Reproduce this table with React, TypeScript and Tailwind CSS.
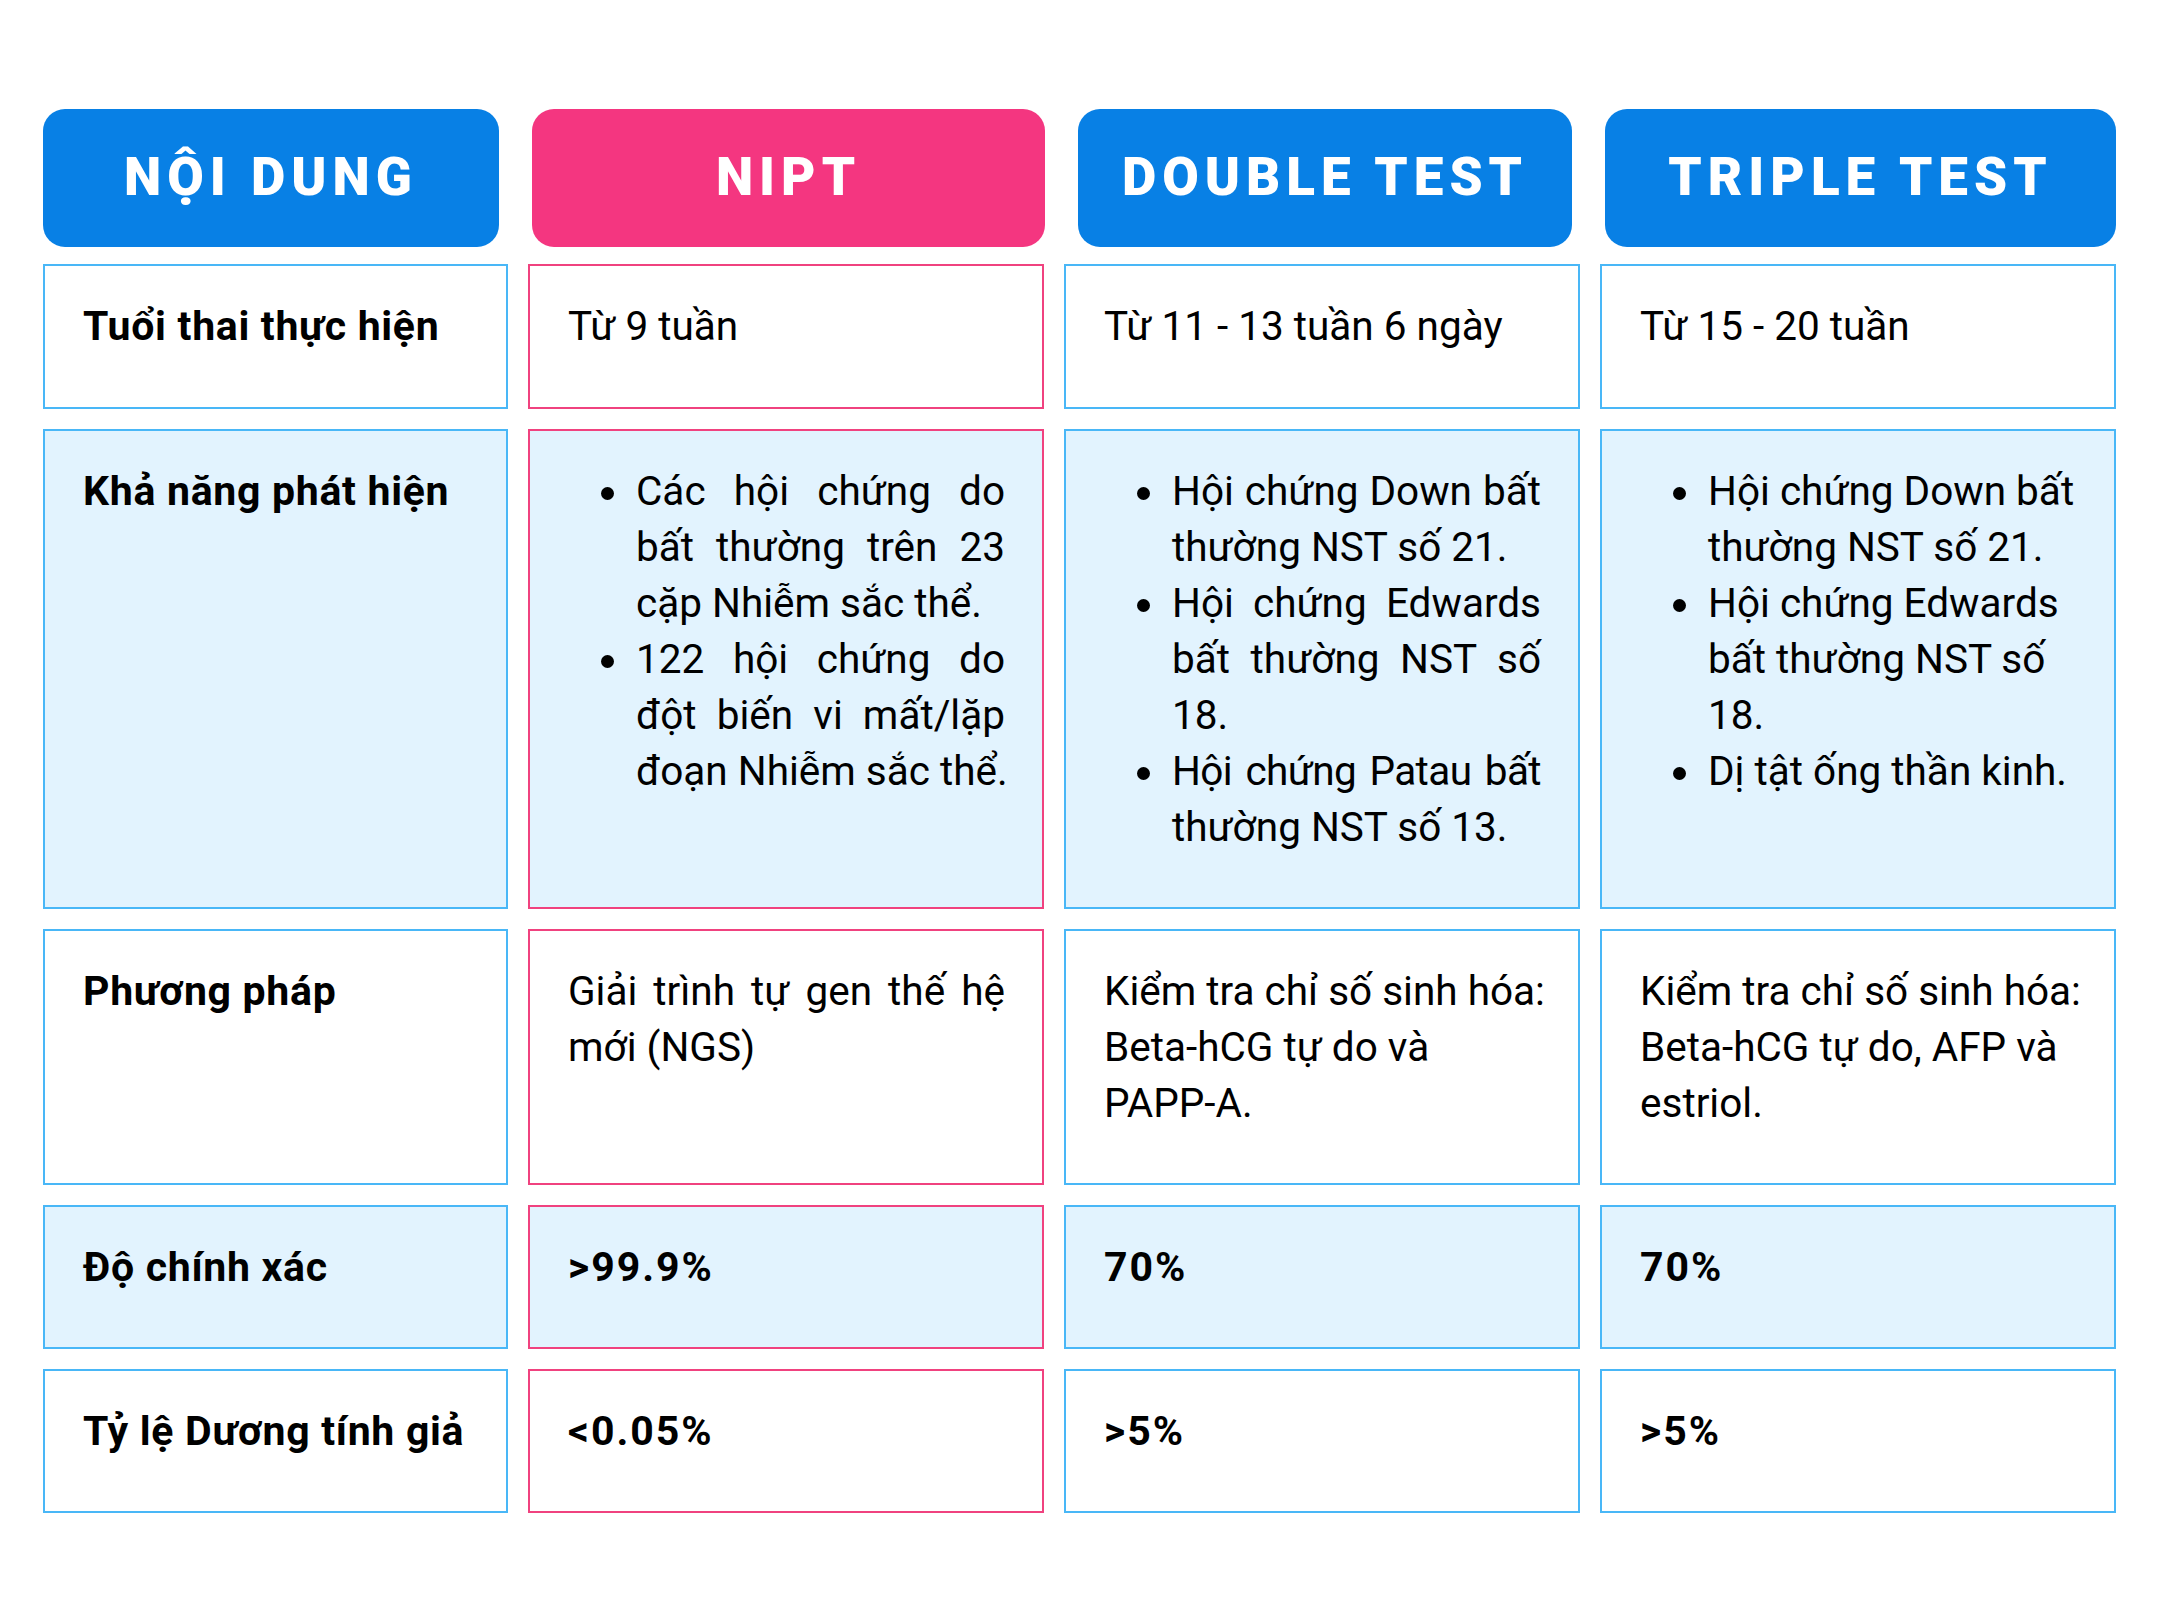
import React from "react";

const BLUE_BORDER = "border-[#49b7f7]";
const PINK_BORDER = "border-[#f0427f]";

type Line = { t: string; j?: boolean; tight?: boolean };

function Lines({ lines }: { lines: Line[] }) {
  return (
    <>
      {lines.map((l, i) => (
        <div
          key={i}
          className={`whitespace-nowrap ${l.j ? "text-justify [text-align-last:justify]" : ""} ${
            l.tight ? "tracking-[-0.6px]" : ""
          }`}
        >
          {l.t}
        </div>
      ))}
    </>
  );
}

function Bullet({ lines }: { lines: Line[] }) {
  return (
    <div className="flex">
      <div className="w-[68px] shrink-0 flex justify-end pr-[22px]">
        <div className="w-[13px] h-[13px] rounded-full bg-black mt-[24px]" />
      </div>
      <div className="flex-1 min-w-0">
        <Lines lines={lines} />
      </div>
    </div>
  );
}

function Cell({
  pink,
  tint,
  children,
}: {
  pink?: boolean;
  tint?: boolean;
  children: React.ReactNode;
}) {
  return (
    <div
      className={`border-2 ${pink ? PINK_BORDER : BLUE_BORDER} ${
        tint ? "bg-[#e2f3fe]" : "bg-white"
      } pt-[32px] pl-[38px] pr-[37px] text-[40.5px] leading-[56px] text-black`}
    >
      {children}
    </div>
  );
}

function Bold({ children }: { children: React.ReactNode }) {
  return <div className="font-bold text-[41px] tracking-[0.7px]">{children}</div>;
}

function Val({ children }: { children: React.ReactNode }) {
  return <div className="font-bold text-[41px] tracking-[2px]">{children}</div>;
}

function Header({ w, pink, children }: { w: string; pink?: boolean; children: React.ReactNode }) {
  return (
    <div
      className={`${w} h-[138px] rounded-[22px] ${
        pink ? "bg-[#f43680]" : "bg-[#0880e5]"
      } flex items-center justify-center text-white text-[53px] font-black tracking-[6px]`}
    >
      {children}
    </div>
  );
}

export default function App() {
  return (
    <div
      className="w-[2160px] h-[1620px] bg-white pt-[109px] pl-[43px]"
      style={{ fontFamily: "Roboto, 'Noto Sans', sans-serif" }}
    >
      <div className="flex gap-[33px]">
        <Header w="w-[456px]">NỘI DUNG</Header>
        <Header w="w-[513px]" pink>
          NIPT
        </Header>
        <Header w="w-[494px]">DOUBLE TEST</Header>
        <Header w="w-[511px]">TRIPLE TEST</Header>
      </div>

      <div className="mt-[17px] grid grid-cols-[465px_516px_516px_516px] grid-rows-[145px_480px_256px_144px_144px] gap-x-[20px] gap-y-[20px]">
        {/* Row 1 */}
        <Cell>
          <Bold>Tuổi thai thực hiện</Bold>
        </Cell>
        <Cell pink>
          <div>Từ 9 tuần</div>
        </Cell>
        <Cell>
          <div>Từ 11 - 13 tuần 6 ngày</div>
        </Cell>
        <Cell>
          <div>Từ 15 - 20 tuần</div>
        </Cell>

        {/* Row 2 */}
        <Cell tint>
          <Bold>Khả năng phát hiện</Bold>
        </Cell>
        <Cell tint pink>
          <Bullet
            lines={[
              { t: "Các hội chứng do", j: true },
              { t: "bất thường trên 23", j: true },
              { t: "cặp Nhiễm sắc thể." },
            ]}
          />
          <Bullet
            lines={[
              { t: "122 hội chứng do", j: true },
              { t: "đột biến vi mất/lặp", j: true },
              { t: "đoạn Nhiễm sắc thể." },
            ]}
          />
        </Cell>
        <Cell tint>
          <Bullet
            lines={[
              { t: "Hội chứng Down bất", j: true },
              { t: "thường NST số 21." },
            ]}
          />
          <Bullet
            lines={[
              { t: "Hội chứng Edwards", j: true },
              { t: "bất thường NST số", j: true },
              { t: "18." },
            ]}
          />
          <Bullet
            lines={[
              { t: "Hội chứng Patau bất", j: true, tight: true },
              { t: "thường NST số 13." },
            ]}
          />
        </Cell>
        <Cell tint>
          <Bullet lines={[{ t: "Hội chứng Down bất" }, { t: "thường NST số 21." }]} />
          <Bullet lines={[{ t: "Hội chứng Edwards" }, { t: "bất thường NST số" }, { t: "18." }]} />
          <Bullet lines={[{ t: "Dị tật ống thần kinh." }]} />
        </Cell>

        {/* Row 3 */}
        <Cell>
          <Bold>Phương pháp</Bold>
        </Cell>
        <Cell pink>
          <Lines lines={[{ t: "Giải trình tự gen thế hệ", j: true }, { t: "mới (NGS)" }]} />
        </Cell>
        <Cell>
          <Lines
            lines={[{ t: "Kiểm tra chỉ số sinh hóa:" }, { t: "Beta-hCG tự do và" }, { t: "PAPP-A." }]}
          />
        </Cell>
        <Cell>
          <Lines
            lines={[
              { t: "Kiểm tra chỉ số sinh hóa:" },
              { t: "Beta-hCG tự do, AFP và" },
              { t: "estriol." },
            ]}
          />
        </Cell>

        {/* Row 4 */}
        <Cell tint>
          <Bold>Độ chính xác</Bold>
        </Cell>
        <Cell tint pink>
          <Val>&gt;99.9%</Val>
        </Cell>
        <Cell tint>
          <Val>70%</Val>
        </Cell>
        <Cell tint>
          <Val>70%</Val>
        </Cell>

        {/* Row 5 */}
        <Cell>
          <Bold>Tỷ lệ Dương tính giả</Bold>
        </Cell>
        <Cell pink>
          <Val>&lt;0.05%</Val>
        </Cell>
        <Cell>
          <Val>&gt;5%</Val>
        </Cell>
        <Cell>
          <Val>&gt;5%</Val>
        </Cell>
      </div>
    </div>
  );
}
